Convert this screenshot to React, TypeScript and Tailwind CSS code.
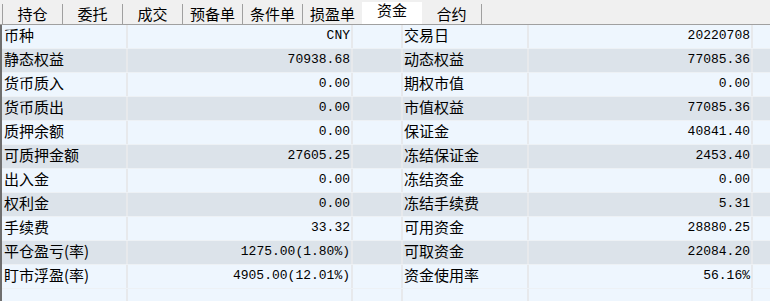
import React from 'react';

const tabs = ['持仓', '委托', '成交', '预备单', '条件单', '损盈单', '资金', '合约'];
const activeTab = 6;

const rows: [string, string, string, string][] = [
    ['币种', 'CNY', '交易日', '20220708'],
    ['静态权益', '70938.68', '动态权益', '77085.36'],
    ['货币质入', '0.00', '期权市值', '0.00'],
    ['货币质出', '0.00', '市值权益', '77085.36'],
    ['质押余额', '0.00', '保证金', '40841.40'],
    ['可质押金额', '27605.25', '冻结保证金', '2453.40'],
    ['出入金', '0.00', '冻结资金', '0.00'],
    ['权利金', '0.00', '冻结手续费', '5.31'],
    ['手续费', '33.32', '可用资金', '28880.25'],
    ['平仓盈亏(率)', '1275.00(1.80%)', '可取资金', '22084.20'],
    ['盯市浮盈(率)', '4905.00(12.01%)', '资金使用率', '56.16%'],
    ['', '', '', ''],
];

const cjk = "font-['Noto_Sans_CJK_SC',sans-serif]";
const mono = "font-['Liberation_Mono',monospace]";

export default function App() {
    return (
        <div className={`w-[770px] h-[301px] overflow-hidden bg-[#f0f0f0] text-black ${cjk}`}>
            {/* tab strip */}
            <div className="flex h-[25px] pl-[2px] border-b border-[#a0a0a0]">
                {tabs.map((t, i) =>
                    i === activeTab ? (
                        <div
                            key={t}
                            className="w-[60px] h-[22px] mt-[2px] bg-white text-center text-[15px] leading-[16px]"
                        >
                            {t}
                        </div>
                    ) : (
                        <div
                            key={t}
                            className={
                                'w-[60px] h-[20px] mt-[4px] text-center text-[15px] leading-[20px] border-[#a0a0a0] ' +
                                (i === tabs.length - 1 ? 'border-r' : 'border-l')
                            }
                        >
                            {t}
                        </div>
                    )
                )}
            </div>

            {/* fund table */}
            <div className="border-l-2 border-[#6f6f6f]">
                {rows.map((r, i) => (
                    <div
                        key={i}
                        className={
                            'grid grid-cols-[126px_225px_50px_126px_224px_1fr] h-[24px] border-b border-[#edf1f5] ' +
                            (i % 2 === 1 && r[0] ? 'bg-[#dce3ea]' : 'bg-[#eef6fe]')
                        }
                    >
                        <div className="border-r-2 border-[#e7e9ec] pl-[2px] text-[15px] leading-[19px] whitespace-nowrap">
                            {r[0]}
                        </div>
                        <div className={`border-r-2 border-[#e7e9ec] pr-[1px] text-right text-[13px] leading-[21px] ${mono}`}>
                            {r[1]}
                        </div>
                        <div className="border-r-2 border-[#e7e9ec]" />
                        <div className="border-r-2 border-[#e7e9ec] pl-[1px] text-[15px] leading-[19px] whitespace-nowrap">
                            {r[2]}
                        </div>
                        <div className={`border-r-2 border-[#e7e9ec] pr-[1px] text-right text-[13px] leading-[21px] ${mono}`}>
                            {r[3]}
                        </div>
                        <div />
                    </div>
                ))}
            </div>
        </div>
    );
}
